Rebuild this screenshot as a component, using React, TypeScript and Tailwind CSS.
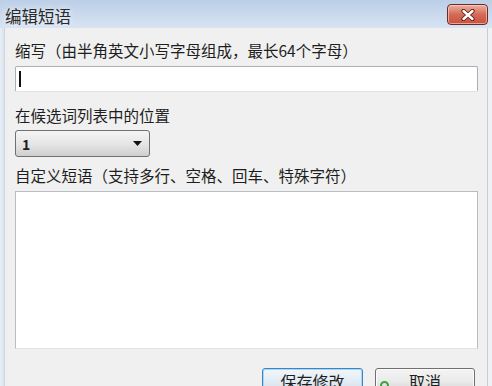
import React from "react";

function CloseButton() {
    return (
        <div className="mt-[4px] mr-[4px] ml-auto w-[41px] h-[21px] rounded-[4px] border border-[#6b2a22] bg-gradient-to-b from-[#eab0a2] via-[#d46a55] to-[#c8503f] flex items-center justify-center shadow-[inset_0_0_0_1px_rgba(255,220,210,0.6)]">
            <svg width="14" height="12" viewBox="0 0 14 12">
                <path d="M2.5 2 L11.5 10 M11.5 2 L2.5 10" stroke="#5a1a12" strokeWidth="4.2" strokeLinecap="round" />
                <path d="M2.5 2 L11.5 10 M11.5 2 L2.5 10" stroke="#ffffff" strokeWidth="2.4" strokeLinecap="round" />
            </svg>
        </div>
    );
}

export default function App() {
    return (
        <div className="w-[492px] h-[386px] overflow-hidden flex flex-col bg-[#dfe7f1] font-['Noto_Sans_CJK_SC',sans-serif] text-[#1e1e1e]">
            {/* title bar */}
            <div className="h-[28px] shrink-0 flex items-start bg-gradient-to-b from-[#bccfe7] to-[#d7e4f3]">
                <span className="pl-[5px] pt-[6px] text-[16.5px] leading-[20px] text-[#2a2a2a] [text-shadow:0_0_6px_rgba(255,255,255,0.9)]">
                    编辑短语
                </span>
                <CloseButton />
            </div>

            <div className="flex-1 flex">
                <div className="w-[5px] bg-gradient-to-r from-[#e9eef5] to-[#dbe4ef] border-r border-[#ccd5e0]" />

                {/* client area */}
                <div className="flex-1 bg-[#f0f0f0] pl-[10px] pr-[9px] pt-[12px] flex flex-col">
                    <p className="text-[15.5px] leading-[20px]">缩写（由半角英文小写字母组成，最长64个字母）</p>
                    <div className="mt-[6px] h-[26px] rounded-[2px] border border-[#a9b0b8] border-b-[#dfe3e8] bg-white flex items-center pl-[3px]">
                        <div className="w-[1.5px] h-[16px] bg-[#111]" />
                    </div>

                    <p className="mt-[13px] text-[15.5px] leading-[20px]">在候选词列表中的位置</p>
                    <div className="mt-[5px] w-[135px] h-[27px] rounded-[3px] border border-[#707070] bg-gradient-to-b from-[#f4f4f4] via-[#e6e6e6] to-[#cfcfcf] flex items-center pl-[6px] pr-[7px]">
                        <span className="text-[14px] font-semibold leading-none">1</span>
                        <svg className="ml-auto" width="9" height="5" viewBox="0 0 9 5">
                            <path d="M0 0 H9 L4.5 5 Z" fill="#111" />
                        </svg>
                    </div>

                    <p className="mt-[8px] text-[15.5px] leading-[20px]">自定义短语（支持多行、空格、回车、特殊字符）</p>
                    <div className="mt-[6px] h-[158px] border border-[#b8bdc3] border-b-[#e2e5e8] bg-white" />

                    <div className="mt-[19px] flex justify-end gap-[12px] pr-[3px]">
                        <div className="w-[101px] h-[25px] rounded-[3px] border border-[#3a86c4] bg-gradient-to-b from-[#f1f6fa] via-[#e4edf4] to-[#d3dee8] shadow-[inset_0_0_0_1px_#a9d6f5] flex items-center justify-center text-[16px] leading-none">
                            保存修改
                        </div>
                        <div className="relative w-[100px] h-[25px] rounded-[3px] border border-[#707070] bg-gradient-to-b from-[#f4f4f4] via-[#ebebeb] to-[#d6d6d6] shadow-[inset_0_0_0_1px_#fcfcfc] flex items-center justify-center text-[16px] leading-none">
                            取消
                            <span className="absolute left-[4px] top-[12px] w-[9px] h-[9px] rounded-full border-2 border-[#3aa53a]" />
                        </div>
                    </div>
                </div>

                <div className="w-[5px] bg-[#eef1f5] border-l border-[#c9ced4]" />
            </div>
        </div>
    );
}
